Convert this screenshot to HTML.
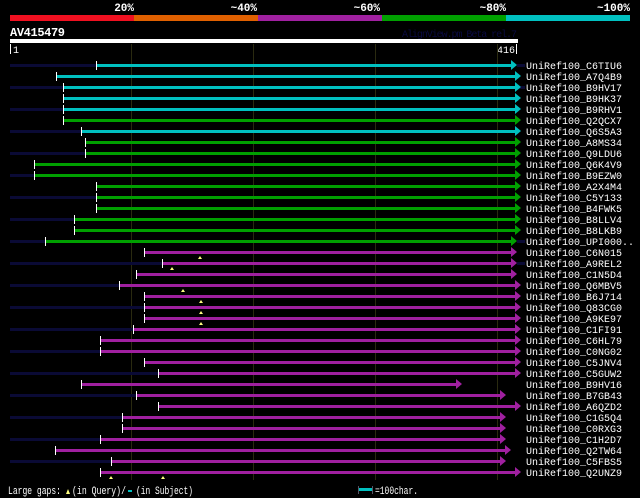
<!DOCTYPE html>
<html><head><meta charset="utf-8"><style>
html,body{margin:0;padding:0;background:#000;}
svg{display:block}
text{font-family:"Liberation Mono","DejaVu Sans Mono",monospace;}
</style></head><body>
<svg width="640" height="498" viewBox="0 0 640 498" xmlns="http://www.w3.org/2000/svg">
<rect width="640" height="498" fill="#000"/>
<g font-size="11" font-weight="bold" fill="#fff" text-anchor="end">
<text x="134" y="11">20%</text><text x="257" y="11">~40%</text><text x="380" y="11">~60%</text><text x="506" y="11">~80%</text><text x="630" y="11">~100%</text>
</g>
<rect x="10" y="15" width="124" height="6" fill="#f01020"/>
<rect x="134" y="15" width="124" height="6" fill="#e06000"/>
<rect x="258" y="15" width="124" height="6" fill="#a020a0"/>
<rect x="382" y="15" width="124" height="6" fill="#00a000"/>
<rect x="506" y="15" width="124" height="6" fill="#00c0c0"/>
<text x="10" y="36" font-size="12" font-weight="bold" fill="#fff" textLength="55">AV415479</text>
<text x="402" y="37" font-size="10" fill="#0a0a40" textLength="115">AlignView.pm Beta rel.7</text>
<rect x="10" y="39" width="508" height="4" fill="#fff"/>
<rect x="10" y="44" width="1" height="10" fill="#fff"/><text x="13" y="53" font-size="10" fill="#fff">1</text>
<text x="497" y="53" font-size="10" fill="#fff">416</text><rect x="516" y="44" width="1" height="10" fill="#fff"/>
<g stroke="#2a2a10" stroke-width="1">
<line x1="131.5" y1="44" x2="131.5" y2="480"/><line x1="253.5" y1="44" x2="253.5" y2="480"/><line x1="375.5" y1="44" x2="375.5" y2="480"/><line x1="497.5" y1="44" x2="497.5" y2="480"/>
</g>
<g id="rows">
<g fill="#0a0a35">
<rect x="10" y="64" width="86" height="3"/><rect x="10" y="86" width="53" height="3"/><rect x="10" y="108" width="53" height="3"/><rect x="10" y="130" width="71" height="3"/><rect x="10" y="152" width="75" height="3"/><rect x="10" y="174" width="24" height="3"/><rect x="10" y="196" width="86" height="3"/><rect x="10" y="218" width="64" height="3"/><rect x="10" y="240" width="35" height="3"/><rect x="10" y="262" width="152" height="3"/><rect x="10" y="284" width="109" height="3"/><rect x="10" y="306" width="134" height="3"/><rect x="10" y="328" width="123" height="3"/><rect x="10" y="350" width="90" height="3"/><rect x="10" y="372" width="148" height="3"/><rect x="10" y="394" width="126" height="3"/><rect x="10" y="416" width="112" height="3"/><rect x="10" y="438" width="90" height="3"/><rect x="10" y="460" width="101" height="3"/>
<rect x="517" y="64" width="8" height="3"/><rect x="517" y="86" width="8" height="3"/><rect x="517" y="240" width="8" height="3"/><rect x="517" y="262" width="8" height="3"/>
</g>
<g fill="#00c0c0">
<rect x="96" y="64" width="415" height="3"/><rect x="56" y="75" width="459" height="3"/><rect x="63" y="86" width="452" height="3"/><rect x="63" y="97" width="452" height="3"/><rect x="63" y="108" width="452" height="3"/><rect x="81" y="130" width="434" height="3"/>
<path d="M511 60v10l6-5zM515 71v10l6-5zM515 82v10l6-5zM515 93v10l6-5zM515 104v10l6-5zM515 126v10l6-5z"/>
</g>
<g fill="#00a000">
<rect x="63" y="119" width="452" height="3"/><rect x="85" y="141" width="430" height="3"/><rect x="85" y="152" width="430" height="3"/><rect x="34" y="163" width="481" height="3"/><rect x="34" y="174" width="481" height="3"/><rect x="96" y="185" width="419" height="3"/><rect x="96" y="196" width="419" height="3"/><rect x="96" y="207" width="419" height="3"/><rect x="74" y="218" width="441" height="3"/><rect x="74" y="229" width="441" height="3"/><rect x="45" y="240" width="466" height="3"/>
<path d="M515 115v10l6-5zM515 137v10l6-5zM515 148v10l6-5zM515 159v10l6-5zM515 170v10l6-5zM515 181v10l6-5zM515 192v10l6-5zM515 203v10l6-5zM515 214v10l6-5zM515 225v10l6-5zM511 236v10l6-5z"/>
</g>
<g fill="#a020a0">
<rect x="144" y="251" width="367" height="3"/><rect x="162" y="262" width="349" height="3"/><rect x="136" y="273" width="375" height="3"/><rect x="119" y="284" width="396" height="3"/><rect x="144" y="295" width="371" height="3"/><rect x="144" y="306" width="371" height="3"/><rect x="144" y="317" width="371" height="3"/><rect x="133" y="328" width="382" height="3"/><rect x="100" y="339" width="415" height="3"/><rect x="100" y="350" width="415" height="3"/><rect x="144" y="361" width="371" height="3"/><rect x="158" y="372" width="357" height="3"/><rect x="81" y="383" width="375" height="3"/><rect x="136" y="394" width="364" height="3"/><rect x="158" y="405" width="357" height="3"/><rect x="122" y="416" width="378" height="3"/><rect x="122" y="427" width="378" height="3"/><rect x="100" y="438" width="400" height="3"/><rect x="55" y="449" width="450" height="3"/><rect x="111" y="460" width="389" height="3"/><rect x="100" y="471" width="415" height="3"/>
<path d="M511 247v10l6-5zM511 258v10l6-5zM511 269v10l6-5zM515 280v10l6-5zM515 291v10l6-5zM515 302v10l6-5zM515 313v10l6-5zM515 324v10l6-5zM515 335v10l6-5zM515 346v10l6-5zM515 357v10l6-5zM515 368v10l6-5zM456 379v10l6-5zM500 390v10l6-5zM515 401v10l6-5zM500 412v10l6-5zM500 423v10l6-5zM500 434v10l6-5zM505 445v10l6-5zM500 456v10l6-5zM515 467v10l6-5z"/>
</g>
<g fill="#fff">
<rect x="96" y="61" width="1" height="9"/><rect x="56" y="72" width="1" height="9"/><rect x="63" y="83" width="1" height="9"/><rect x="63" y="94" width="1" height="9"/><rect x="63" y="105" width="1" height="9"/><rect x="63" y="116" width="1" height="9"/><rect x="81" y="127" width="1" height="9"/><rect x="85" y="138" width="1" height="9"/><rect x="85" y="149" width="1" height="9"/><rect x="34" y="160" width="1" height="9"/><rect x="34" y="171" width="1" height="9"/><rect x="96" y="182" width="1" height="9"/><rect x="96" y="193" width="1" height="9"/><rect x="96" y="204" width="1" height="9"/><rect x="74" y="215" width="1" height="9"/><rect x="74" y="226" width="1" height="9"/><rect x="45" y="237" width="1" height="9"/><rect x="144" y="248" width="1" height="9"/><rect x="162" y="259" width="1" height="9"/><rect x="136" y="270" width="1" height="9"/><rect x="119" y="281" width="1" height="9"/><rect x="144" y="292" width="1" height="9"/><rect x="144" y="303" width="1" height="9"/><rect x="144" y="314" width="1" height="9"/><rect x="133" y="325" width="1" height="9"/><rect x="100" y="336" width="1" height="9"/><rect x="100" y="347" width="1" height="9"/><rect x="144" y="358" width="1" height="9"/><rect x="158" y="369" width="1" height="9"/><rect x="81" y="380" width="1" height="9"/><rect x="136" y="391" width="1" height="9"/><rect x="158" y="402" width="1" height="9"/><rect x="122" y="413" width="1" height="9"/><rect x="122" y="424" width="1" height="9"/><rect x="100" y="435" width="1" height="9"/><rect x="55" y="446" width="1" height="9"/><rect x="111" y="457" width="1" height="9"/><rect x="100" y="468" width="1" height="9"/>
</g>
<g fill="#ffff80">
<path d="M198 259l2-3 2 3zM170 270l2-3 2 3zM181 292l2-3 2 3zM199 303l2-3 2 3zM199 314l2-3 2 3zM199 325l2-3 2 3zM109 479l2-3 2 3zM161 479l2-3 2 3z"/>
</g>
</g>
<g font-size="10" fill="#fff">
<text x="526" y="69">UniRef100_C6TIU6</text><text x="526" y="80">UniRef100_A7Q4B9</text><text x="526" y="91">UniRef100_B9HV17</text><text x="526" y="102">UniRef100_B9HK37</text><text x="526" y="113">UniRef100_B9RHV1</text><text x="526" y="124">UniRef100_Q2QCX7</text><text x="526" y="135">UniRef100_Q6S5A3</text><text x="526" y="146">UniRef100_A8MS34</text><text x="526" y="157">UniRef100_Q9LDU6</text><text x="526" y="168">UniRef100_Q6K4V9</text><text x="526" y="179">UniRef100_B9EZW0</text><text x="526" y="190">UniRef100_A2X4M4</text><text x="526" y="201">UniRef100_C5Y133</text><text x="526" y="212">UniRef100_B4FWK5</text><text x="526" y="223">UniRef100_B8LLV4</text><text x="526" y="234">UniRef100_B8LKB9</text><text x="526" y="245">UniRef100_UPI000..</text><text x="526" y="256">UniRef100_C6N015</text><text x="526" y="267">UniRef100_A9REL2</text><text x="526" y="278">UniRef100_C1N5D4</text><text x="526" y="289">UniRef100_Q6MBV5</text><text x="526" y="300">UniRef100_B6J714</text><text x="526" y="311">UniRef100_Q83CG0</text><text x="526" y="322">UniRef100_A9KE97</text><text x="526" y="333">UniRef100_C1FI91</text><text x="526" y="344">UniRef100_C6HL79</text><text x="526" y="355">UniRef100_C0NG02</text><text x="526" y="366">UniRef100_C5JNV4</text><text x="526" y="377">UniRef100_C5GUW2</text><text x="526" y="388">UniRef100_B9HV16</text><text x="526" y="399">UniRef100_B7GB43</text><text x="526" y="410">UniRef100_A6QZD2</text><text x="526" y="421">UniRef100_C1G5Q4</text><text x="526" y="432">UniRef100_C0RXG3</text><text x="526" y="443">UniRef100_C1H2D7</text><text x="526" y="454">UniRef100_Q2TW64</text><text x="526" y="465">UniRef100_C5FBS5</text><text x="526" y="476">UniRef100_Q2UNZ9</text>
</g>
<g font-size="11" fill="#fff" font-family="Liberation Sans, sans-serif">
<text x="8" y="494" textLength="53" lengthAdjust="spacingAndGlyphs">Large gaps:</text>
<path d="M66 494l2-5 2 5z" fill="#ffff80"/>
<text x="72" y="494" textLength="54" lengthAdjust="spacingAndGlyphs">(in Query)/</text>
<rect x="128" y="490" width="4" height="2" fill="#00c0c0"/>
<text x="136" y="494" textLength="57" lengthAdjust="spacingAndGlyphs">(in Subject)</text>
<rect x="358" y="486" width="1" height="8" fill="#556"/>
<rect x="359" y="488" width="13" height="3" fill="#00c0c0"/>
<rect x="372" y="486" width="1" height="8" fill="#556"/>
<text x="375" y="494" textLength="43" lengthAdjust="spacingAndGlyphs">=100char.</text>
</g>
</svg>
</body></html>
